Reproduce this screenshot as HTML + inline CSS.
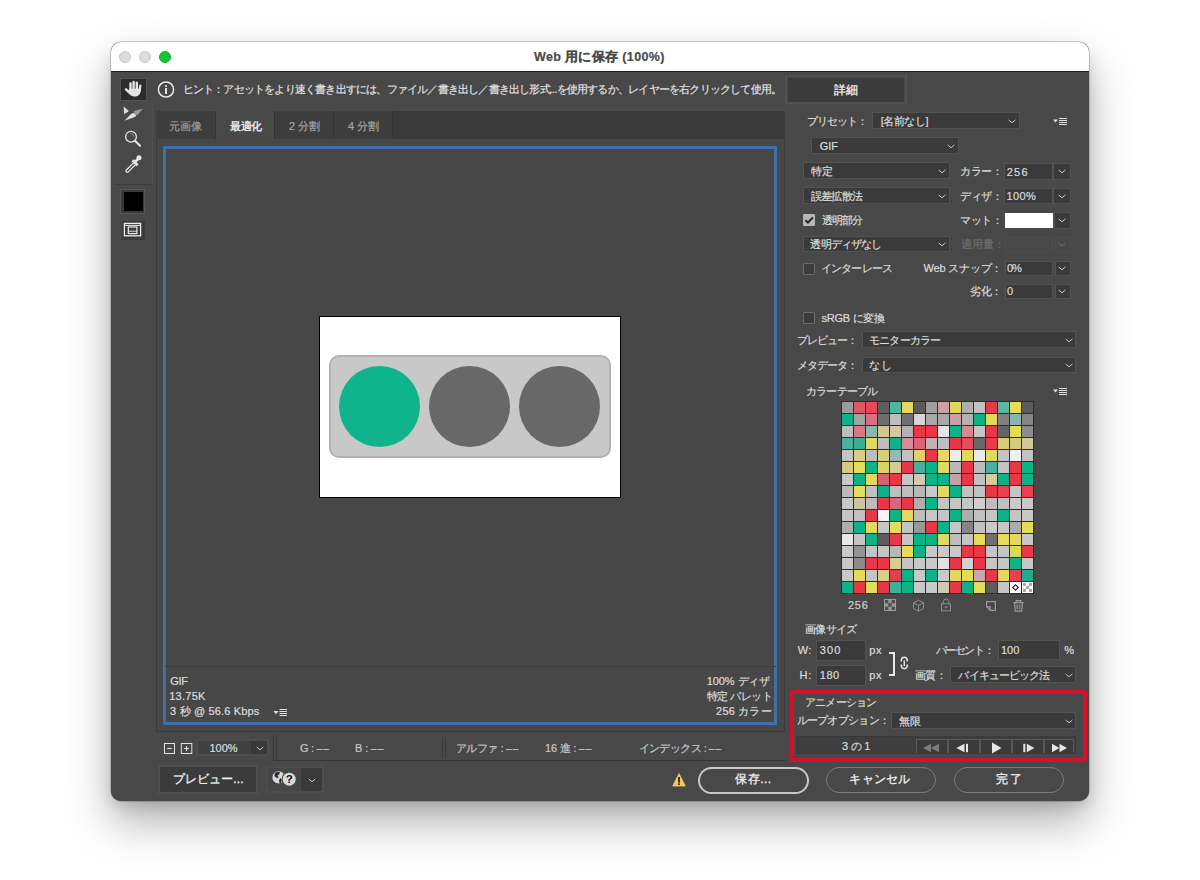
<!DOCTYPE html>
<html><head><meta charset="utf-8">
<style>
*{box-sizing:border-box;margin:0;padding:0}
html,body{width:1200px;height:880px;overflow:hidden;background:#fff;font-family:"Liberation Sans",sans-serif}
.a{position:absolute}
#win{position:absolute;left:111px;top:42px;width:978px;height:759px;border-radius:10px;background:#484848;box-shadow:0 0 0 0.5px rgba(0,0,0,.35),0 22px 44px rgba(0,0,0,.30),0 6px 14px rgba(0,0,0,.12);overflow:hidden}
#title{position:absolute;left:0;top:0;width:978px;height:30px;background:#fff;border-bottom:1px solid #1e1e1e}
.tl{position:absolute;top:9px;width:12px;height:12px;border-radius:50%}
.t{position:absolute;white-space:nowrap;color:#dcdcdc;font-size:11px;line-height:13px;-webkit-text-stroke-width:0.2px}
.dd{position:absolute;background:#3a3a3a;border:1px solid #525252}
.chev{position:absolute;width:5px;height:5px;border-right:1px solid #d0d0d0;border-bottom:1px solid #d0d0d0;transform:rotate(45deg)}
.cb{position:absolute;width:13px;height:13px;background:#3c3c3c;border:1px solid #6c6c6c;border-radius:1px}
.tab{position:absolute;top:111px;height:28px;background:#3d3d3d;border-right:1px solid #343434}
.gc{position:absolute;width:11px;height:11px}
.btn{position:absolute;border-radius:14px;border:1px solid #7c7c7c}
</style></head><body>
<div id="win">
  <div id="title">
    <div class="tl" style="left:8px;background:#dcdcdc;border:1px solid #c8c8c8"></div>
    <div class="tl" style="left:28px;background:#dcdcdc;border:1px solid #c8c8c8"></div>
    <div class="tl" style="left:48px;background:#16c23a;border:1px solid #12ad31"></div>
    <div class="t" style="left:423.1px;top:8px;font-size:12.5px;font-weight:bold;color:#4a4a4a;line-height:15px;letter-spacing:0.349px">Web 用に保存 (100%)</div>
  </div>
</div>

<!-- left toolbar -->
<div class="a" style="left:152px;top:104px;width:1px;height:80px;background:#4f4f4f"></div>
<div class="a" style="left:120px;top:78px;width:27px;height:23px;border:1px solid #525252"></div>
<div class="a" style="left:121px;top:79px;width:25px;height:21px;background:#2b2b2b"></div>
<svg class="a" style="left:121px;top:79px" width="25" height="21" viewBox="0 0 25 21">
 <g stroke="#e4e4e4" stroke-linecap="round" fill="none">
  <path d="M9.5 11.5V4.4" stroke-width="2.4"/><path d="M12.6 11V3" stroke-width="2.4"/><path d="M15.8 11V3.6" stroke-width="2.4"/><path d="M19.3 6.6L18.6 12" stroke-width="2.3"/>
  <path d="M5 10.3L9 14.2" stroke-width="2.5"/>
 </g>
 <path d="M8.2 9.8H19.9C19.9 14.2 18.2 17.4 14.6 17.4H12.6C10.6 17.4 9 16 7.4 13.8Z" fill="#e4e4e4"/>
</svg>
<svg class="a" style="left:121px;top:104px" width="25" height="19" viewBox="0 0 25 19">
 <path d="M2.6 2.4L8 6.9L3.2 10.3Z" fill="#dedede"/>
 <path d="M3.4 16.8L10.6 9.6L13 8.9L15.3 11.2L14.4 12.8Z" fill="#e2e2e2"/>
 <path d="M12.6 7.2L22.2 4.6L16 11.4L13.4 9Z" fill="#9c9c9c"/>
</svg>
<svg class="a" style="left:123px;top:129px" width="20" height="20" viewBox="0 0 20 20">
 <circle cx="8" cy="7.7" r="5.4" fill="none" stroke="#e6e6e6" stroke-width="1.3"/>
 <path d="M7.5 4.5A3.5 3.5 0 0 1 11 7.5" fill="none" stroke="#8a8a8a" stroke-width="1"/>
 <path d="M12.2 12L17 16.8" stroke="#e6e6e6" stroke-width="2.1" stroke-linecap="round"/>
</svg>
<svg class="a" style="left:123px;top:154px" width="20" height="20" viewBox="0 0 20 20">
 <path d="M4.3 16.9L11.6 9.6" stroke="#e6e6e6" stroke-width="4" stroke-linecap="round"/>
 <path d="M4.3 16.9L11.4 9.8" stroke="#474747" stroke-width="1.4" stroke-linecap="round"/>
 <path d="M9.5 6.2L14.6 11.3" stroke="#e6e6e6" stroke-width="2.8"/>
 <circle cx="16" cy="3.8" r="2.5" fill="#e6e6e6"/><path d="M12.6 5.5L14.5 7.4" stroke="#e6e6e6" stroke-width="3.4"/>
</svg>
<div class="a" style="left:115px;top:184px;width:37px;height:1px;background:#3c3c3c"></div>
<div class="a" style="left:120px;top:189px;width:25px;height:25px;background:#3a3a3a;border:1px solid #575757"></div>
<div class="a" style="left:124px;top:192px;width:19px;height:19px;background:#000"></div>
<div class="a" style="left:122px;top:221px;width:23px;height:19px;background:#3a3a3a"></div>
<svg class="a" style="left:122px;top:221px" width="23" height="19" viewBox="0 0 23 19">
 <rect x="2.4" y="2.4" width="16.2" height="12.4" fill="none" stroke="#ececec" stroke-width="1.3"/>
 <path d="M2.4 4.4H18.6" stroke="#ececec" stroke-width="1"/>
 <rect x="6.3" y="6" width="8.6" height="6.6" fill="none" stroke="#ececec" stroke-width="1.2"/>
 <path d="M6.3 10.2H14.9" stroke="#ececec" stroke-width="0.9"/>
</svg>
<!-- hint bar -->
<svg class="a" style="left:157px;top:81px" width="18" height="18" viewBox="0 0 18 18"><circle cx="9" cy="8.5" r="7.6" fill="none" stroke="#e6e6e6" stroke-width="1.5"/><circle cx="9" cy="5" r="1.1" fill="#e6e6e6"/><rect x="8" y="7" width="2" height="6" fill="#e6e6e6"/></svg>
<div class="t" style="left:182.5px;top:83px;color:#e0e0e0;letter-spacing:-0.795px">ヒント：アセットをより速く書き出すには、ファイル／書き出し／書き出し形式...を使用するか、レイヤーを右クリックして使用。</div>
<div class="a" style="left:785px;top:75px;width:122px;height:29px;border:2px solid #515151"></div>
<div class="a" style="left:788px;top:78px;width:116px;height:24px;background:#3b3b3b"></div>
<div class="t" style="left:833.8px;top:84px;font-size:12px;color:#f0f0f0;letter-spacing:0.7px;-webkit-text-stroke-width:0.3px">詳細</div>

<!-- canvas panel -->
<div class="a" style="left:156px;top:111px;width:629px;height:621px;background:#474747;border:1px solid #3a3a3a"></div>
<div class="a" style="left:156px;top:111px;width:629px;height:28px;background:#3a3a3a"></div>
<div class="tab" style="left:156px;width:60px"></div>
<div class="tab" style="left:216px;width:59px;background:#484848"></div>
<div class="tab" style="left:275px;width:59px"></div>
<div class="tab" style="left:334px;width:59px"></div>
<div class="t" style="left:169px;top:120px;color:#9c9c9c;letter-spacing:0.2px">元画像</div>
<div class="t" style="left:230px;top:120px;color:#f4f4f4;-webkit-text-stroke-width:0.32px;letter-spacing:-0.3px">最適化</div>
<div class="t" style="left:289px;top:120px;color:#a8a8a8;letter-spacing:0.1px">2 分割</div>
<div class="t" style="left:348px;top:120px;color:#a8a8a8;letter-spacing:0.1px">4 分割</div>

<div class="a" style="left:163px;top:146px;width:614px;height:579px;border:3px solid #3f70a8"></div>
<div class="a" style="left:165px;top:666px;width:611px;height:1px;background:#3c3c3c"></div>

<!-- image -->
<div class="a" style="left:319px;top:316px;width:302px;height:182px;background:#fff;border:1px solid #000"></div>
<div class="a" style="left:329px;top:355px;width:282px;height:103px;background:#c8c8c8;border:2px solid #b2b2b2;border-radius:10px"></div>
<div class="a" style="left:339px;top:366px;width:81px;height:81px;border-radius:50%;background:#0fb48c"></div>
<div class="a" style="left:429px;top:366px;width:81px;height:81px;border-radius:50%;background:#686868"></div>
<div class="a" style="left:519px;top:366px;width:81px;height:81px;border-radius:50%;background:#686868"></div>

<!-- info -->
<div class="t" style="left:170.2px;top:675px;letter-spacing:-0.3px">GIF</div>
<div class="t" style="left:169.2px;top:690px;letter-spacing:0.26px">13.75K</div>
<div class="t" style="left:170px;top:705px;letter-spacing:0.17px">3 秒 @ 56.6 Kbps</div>
<div class="t" style="left:706.7px;top:675px;letter-spacing:-0.071px">100% ディザ</div>
<div class="t" style="left:707.0px;top:690px;letter-spacing:-0.567px">特定 パレット</div>
<div class="t" style="left:716.1px;top:705px;letter-spacing:0.184px">256 カラー</div>

<!-- status bar -->
<div class="a" style="left:273px;top:760px;width:512px;height:1px;background:#353535"></div>
<div class="a" style="left:196px;top:739px;width:73px;height:17px;border:2px solid #4d4d4d;background:#414141"></div>
<div class="a" style="left:251px;top:741px;width:16px;height:13px;background:#383838"></div>
<div class="t" style="left:196px;top:742px;width:55px;text-align:center">100%</div>
<div class="a" style="left:273px;top:735px;width:1px;height:25px;background:#3a3a3a"></div>
<div class="a" style="left:276px;top:735px;width:1px;height:25px;background:#3a3a3a"></div>
<div class="a" style="left:442px;top:737px;width:1px;height:21px;background:#3a3a3a"></div>
<div class="a" style="left:445px;top:737px;width:1px;height:21px;background:#3a3a3a"></div>
<div class="t" style="left:300px;top:742px;color:#c8c8c8;letter-spacing:-0.3px">G : <span style="letter-spacing:1.2px;font-size:10px">––</span></div>
<div class="t" style="left:355px;top:742px;color:#c8c8c8;letter-spacing:-0.1px">B : <span style="letter-spacing:1.2px;font-size:10px">––</span></div>
<div class="t" style="left:455.5px;top:742px;color:#c8c8c8;letter-spacing:-0.39px">アルファ : <span style="letter-spacing:1.2px;font-size:10px">––</span></div>
<div class="t" style="left:545px;top:742px;color:#c8c8c8;letter-spacing:-0.21px">16 進 : <span style="letter-spacing:1.2px;font-size:10px">––</span></div>
<div class="t" style="left:638.6px;top:742px;color:#c8c8c8;letter-spacing:-0.57px">インデックス : <span style="letter-spacing:1.2px;font-size:10px">––</span></div>

<!-- bottom buttons -->
<div class="a" style="left:158px;top:765px;width:100px;height:29px;border:2px solid #4f4f4f"></div>
<div class="a" style="left:160px;top:767px;width:96px;height:25px;background:#3b3b3b"></div>
<div class="t" style="left:172.6px;top:773px;font-size:12px;color:#f0f0f0;letter-spacing:0.143px;-webkit-text-stroke-width:0.3px">プレビュー...</div>
<div class="a" style="left:266px;top:766px;width:58px;height:27px;border:2px solid #4d4d4d"></div>
<div class="a" style="left:268px;top:768px;width:32px;height:23px;background:#464646"></div>
<div class="a" style="left:301px;top:768px;width:21px;height:23px;background:#3a3a3a"></div>

<div class="btn" style="left:697.5px;top:766.5px;width:111px;height:27px;border:2px solid #c8c8c8"></div>
<div class="t" style="left:735.4px;top:773px;font-size:12px;color:#f0f0f0;letter-spacing:0.4px;-webkit-text-stroke-width:0.3px">保存...</div>
<div class="btn" style="left:826px;top:767px;width:110px;height:26px"></div>
<div class="t" style="left:849.4px;top:773px;font-size:12px;color:#f0f0f0;letter-spacing:0.15px;-webkit-text-stroke-width:0.3px">キャンセル</div>
<div class="btn" style="left:954px;top:767px;width:110px;height:26px"></div>
<div class="t" style="left:996.1px;top:773px;font-size:12px;color:#f0f0f0;letter-spacing:1.9px;-webkit-text-stroke-width:0.3px">完了</div>


<!-- right panel -->
<div class="t" style="left:806.5px;top:115px;letter-spacing:-1.0px">プリセット：</div>
<div class="dd" style="left:872px;top:112px;width:148px;height:17px"></div>
<div class="t" style="left:880.75px;top:115px;letter-spacing:-0.45px">[名前なし]</div>
<svg class="a" style="left:1053px;top:117px" width="15" height="9" viewBox="0 0 15 9"><path d="M0 2.5h5l-2.5 3z" fill="#e0e0e0"/><rect x="6" y="1" width="8" height="1" fill="#e0e0e0"/><rect x="6" y="3" width="8" height="1" fill="#e0e0e0"/><rect x="6" y="5" width="8" height="1" fill="#e0e0e0"/><rect x="6" y="7" width="8" height="1" fill="#e0e0e0"/></svg>

<div class="dd" style="left:811px;top:137px;width:148px;height:17px"></div>
<div class="t" style="left:819.8px;top:140px;letter-spacing:-0.05px">GIF</div>

<div class="dd" style="left:803px;top:162px;width:147px;height:17px"></div>
<div class="t" style="left:811px;top:165px">特定</div>
<div class="t" style="left:960.2px;top:165px;letter-spacing:-0.367px">カラー：</div>
<div class="dd" style="left:1004px;top:163px;width:49px;height:17px"></div>
<div class="dd" style="left:1053px;top:163px;width:18px;height:17px"></div>
<div class="t" style="left:1006.8px;top:166px;letter-spacing:1.2px">256</div>

<div class="dd" style="left:803px;top:187px;width:147px;height:17px"></div>
<div class="t" style="left:810.75px;top:190px;letter-spacing:-0.75px">誤差拡散法</div>
<div class="t" style="left:960.2px;top:190px;letter-spacing:-0.367px">ディザ：</div>
<div class="dd" style="left:1004px;top:188px;width:49px;height:16px"></div>
<div class="dd" style="left:1053px;top:188px;width:18px;height:16px"></div>
<div class="t" style="left:1006.4px;top:190px;letter-spacing:0.4px">100%</div>

<div class="cb" style="left:803px;top:214px;width:12px;height:12px;background:#b6b6b6;border-color:#b6b6b6"></div>
<svg class="a" style="left:803px;top:214px" width="12" height="12" viewBox="0 0 12 12"><path d="M2.4 6.1l2.5 2.5 4.9-5.1" fill="none" stroke="#262626" stroke-width="2"/></svg>
<div class="t" style="left:821.5px;top:214px;letter-spacing:-0.934px">透明部分</div>
<div class="t" style="left:960.2px;top:214px;letter-spacing:-0.367px">マット：</div>
<div class="a" style="left:1005px;top:213px;width:48px;height:15px;background:#fff"></div>
<div class="dd" style="left:1054px;top:212px;width:17px;height:17px"></div>

<div class="dd" style="left:803px;top:236px;width:147px;height:16px"></div>
<div class="t" style="left:810.4px;top:238px;letter-spacing:-0.833px">透明ディザなし</div>
<div class="t" style="left:961px;top:238px;color:#6e6e6e">適用量：</div>
<div class="a" style="left:1005px;top:237px;width:48px;height:15px;border:1px solid #4e4e4e"></div>
<div class="a" style="left:1055px;top:237px;width:16px;height:15px;border:1px solid #4e4e4e"></div>

<div class="cb" style="left:803px;top:263px;width:12px;height:12px"></div>
<div class="t" style="left:820.5px;top:262px;letter-spacing:-0.667px">インターレース</div>
<div class="t" style="left:923.6px;top:262px;letter-spacing:-0.2px">Web スナップ：</div>
<div class="dd" style="left:1005px;top:261px;width:48px;height:15px"></div>
<div class="dd" style="left:1055px;top:261px;width:16px;height:15px"></div>
<div class="t" style="left:1006.9px;top:262px;letter-spacing:-0.9px">0%</div>

<div class="t" style="left:970.4px;top:285px;letter-spacing:-0.7px">劣化：</div>
<div class="dd" style="left:1005px;top:284px;width:48px;height:15px"></div>
<div class="dd" style="left:1055px;top:284px;width:16px;height:15px"></div>
<div class="t" style="left:1006.9px;top:285px;letter-spacing:0.6px">0</div>

<div class="cb" style="left:803px;top:312px;width:12px;height:12px"></div>
<div class="t" style="left:821.5px;top:312px;letter-spacing:-0.272px">sRGB に変換</div>

<div class="t" style="left:796.5px;top:334px;letter-spacing:-0.92px">プレビュー：</div>
<div class="dd" style="left:862px;top:331px;width:214px;height:17px"></div>
<div class="t" style="left:869.0px;top:334px;letter-spacing:-0.833px">モニターカラー</div>

<div class="t" style="left:796.5px;top:359px;letter-spacing:-0.92px">メタデータ：</div>
<div class="dd" style="left:862px;top:357px;width:214px;height:16px"></div>
<div class="t" style="left:869.4px;top:359px;letter-spacing:0.2px">なし</div>

<div class="t" style="left:806.1px;top:385px;letter-spacing:-0.834px">カラーテーブル</div>
<svg class="a" style="left:1053px;top:387px" width="15" height="9" viewBox="0 0 15 9"><path d="M0 2.5h5l-2.5 3z" fill="#e0e0e0"/><rect x="6" y="1" width="8" height="1" fill="#e0e0e0"/><rect x="6" y="3" width="8" height="1" fill="#e0e0e0"/><rect x="6" y="5" width="8" height="1" fill="#e0e0e0"/><rect x="6" y="7" width="8" height="1" fill="#e0e0e0"/></svg>

<div id="grid" class="a" style="left:841px;top:401px;width:193px;height:193px;background:#2c2c2c"></div>
<!--GRID-->
<div class="gc" style="left:842px;top:402px;background:#9c9c9d"></div>
<div class="gc" style="left:854px;top:402px;background:#e05868"></div>
<div class="gc" style="left:866px;top:402px;background:#e84858"></div>
<div class="gc" style="left:878px;top:402px;background:#5e5e5f"></div>
<div class="gc" style="left:890px;top:402px;background:#4cb8a0"></div>
<div class="gc" style="left:902px;top:402px;background:#e6d85c"></div>
<div class="gc" style="left:914px;top:402px;background:#5a5a5b"></div>
<div class="gc" style="left:926px;top:402px;background:#a0a0a1"></div>
<div class="gc" style="left:938px;top:402px;background:#d0a0a8"></div>
<div class="gc" style="left:950px;top:402px;background:#e0d85c"></div>
<div class="gc" style="left:962px;top:402px;background:#aeaeaf"></div>
<div class="gc" style="left:974px;top:402px;background:#c1c1c2"></div>
<div class="gc" style="left:986px;top:402px;background:#e83848"></div>
<div class="gc" style="left:998px;top:402px;background:#58b8a4"></div>
<div class="gc" style="left:1010px;top:402px;background:#e8dc58"></div>
<div class="gc" style="left:1022px;top:402px;background:#5c5c5d"></div>
<div class="gc" style="left:842px;top:414px;background:#0db387"></div>
<div class="gc" style="left:854px;top:414px;background:#a2a2a3"></div>
<div class="gc" style="left:866px;top:414px;background:#d87080"></div>
<div class="gc" style="left:878px;top:414px;background:#6e6e6f"></div>
<div class="gc" style="left:890px;top:414px;background:#bdbdbe"></div>
<div class="gc" style="left:902px;top:414px;background:#707071"></div>
<div class="gc" style="left:914px;top:414px;background:#d6d6d7"></div>
<div class="gc" style="left:926px;top:414px;background:#a8a8a9"></div>
<div class="gc" style="left:938px;top:414px;background:#a8a8a9"></div>
<div class="gc" style="left:950px;top:414px;background:#c8a0a8"></div>
<div class="gc" style="left:962px;top:414px;background:#b2b2b3"></div>
<div class="gc" style="left:974px;top:414px;background:#0db387"></div>
<div class="gc" style="left:986px;top:414px;background:#e4d858"></div>
<div class="gc" style="left:998px;top:414px;background:#808081"></div>
<div class="gc" style="left:1010px;top:414px;background:#88b4b4"></div>
<div class="gc" style="left:1022px;top:414px;background:#848485"></div>
<div class="gc" style="left:842px;top:426px;background:#bdbdbe"></div>
<div class="gc" style="left:854px;top:426px;background:#d87884"></div>
<div class="gc" style="left:866px;top:426px;background:#88b8b0"></div>
<div class="gc" style="left:878px;top:426px;background:#d0c88c"></div>
<div class="gc" style="left:890px;top:426px;background:#d4c8a4"></div>
<div class="gc" style="left:902px;top:426px;background:#b2b2b3"></div>
<div class="gc" style="left:914px;top:426px;background:#e83848"></div>
<div class="gc" style="left:926px;top:426px;background:#e83848"></div>
<div class="gc" style="left:938px;top:426px;background:#e4e4e5"></div>
<div class="gc" style="left:950px;top:426px;background:#0db387"></div>
<div class="gc" style="left:962px;top:426px;background:#d88890"></div>
<div class="gc" style="left:974px;top:426px;background:#c5c5c6"></div>
<div class="gc" style="left:986px;top:426px;background:#e83848"></div>
<div class="gc" style="left:998px;top:426px;background:#646465"></div>
<div class="gc" style="left:1010px;top:426px;background:#e4dc58"></div>
<div class="gc" style="left:1022px;top:426px;background:#8c8c8d"></div>
<div class="gc" style="left:842px;top:438px;background:#4ab09c"></div>
<div class="gc" style="left:854px;top:438px;background:#3aae94"></div>
<div class="gc" style="left:866px;top:438px;background:#e0d860"></div>
<div class="gc" style="left:878px;top:438px;background:#bebebf"></div>
<div class="gc" style="left:890px;top:438px;background:#0db387"></div>
<div class="gc" style="left:902px;top:438px;background:#d48c98"></div>
<div class="gc" style="left:914px;top:438px;background:#dc6474"></div>
<div class="gc" style="left:926px;top:438px;background:#c4b0b4"></div>
<div class="gc" style="left:938px;top:438px;background:#bebebf"></div>
<div class="gc" style="left:950px;top:438px;background:#e83848"></div>
<div class="gc" style="left:962px;top:438px;background:#e44c5c"></div>
<div class="gc" style="left:974px;top:438px;background:#686869"></div>
<div class="gc" style="left:986px;top:438px;background:#e83a4a"></div>
<div class="gc" style="left:998px;top:438px;background:#d8cc78"></div>
<div class="gc" style="left:1010px;top:438px;background:#d4cc84"></div>
<div class="gc" style="left:1022px;top:438px;background:#d0c898"></div>
<div class="gc" style="left:842px;top:450px;background:#c4c4c5"></div>
<div class="gc" style="left:854px;top:450px;background:#d8d080"></div>
<div class="gc" style="left:866px;top:450px;background:#bdbdbe"></div>
<div class="gc" style="left:878px;top:450px;background:#d8d078"></div>
<div class="gc" style="left:890px;top:450px;background:#98b8b8"></div>
<div class="gc" style="left:902px;top:450px;background:#c2c2c3"></div>
<div class="gc" style="left:914px;top:450px;background:#e0d070"></div>
<div class="gc" style="left:926px;top:450px;background:#e83848"></div>
<div class="gc" style="left:938px;top:450px;background:#e4d860"></div>
<div class="gc" style="left:950px;top:450px;background:#ededee"></div>
<div class="gc" style="left:962px;top:450px;background:#e4d858"></div>
<div class="gc" style="left:974px;top:450px;background:#eaeaeb"></div>
<div class="gc" style="left:986px;top:450px;background:#e0d860"></div>
<div class="gc" style="left:998px;top:450px;background:#c4c4c5"></div>
<div class="gc" style="left:1010px;top:450px;background:#f0f0f1"></div>
<div class="gc" style="left:1022px;top:450px;background:#c2c2c3"></div>
<div class="gc" style="left:842px;top:462px;background:#d4cc84"></div>
<div class="gc" style="left:854px;top:462px;background:#e4dc5c"></div>
<div class="gc" style="left:866px;top:462px;background:#0db387"></div>
<div class="gc" style="left:878px;top:462px;background:#dcd468"></div>
<div class="gc" style="left:890px;top:462px;background:#d4cc94"></div>
<div class="gc" style="left:902px;top:462px;background:#e83848"></div>
<div class="gc" style="left:914px;top:462px;background:#48b09c"></div>
<div class="gc" style="left:926px;top:462px;background:#0db387"></div>
<div class="gc" style="left:938px;top:462px;background:#e0d860"></div>
<div class="gc" style="left:950px;top:462px;background:#b8b8b9"></div>
<div class="gc" style="left:962px;top:462px;background:#e83848"></div>
<div class="gc" style="left:974px;top:462px;background:#bcbcbd"></div>
<div class="gc" style="left:986px;top:462px;background:#48b09c"></div>
<div class="gc" style="left:998px;top:462px;background:#c4c4c5"></div>
<div class="gc" style="left:1010px;top:462px;background:#e83848"></div>
<div class="gc" style="left:1022px;top:462px;background:#0db387"></div>
<div class="gc" style="left:842px;top:474px;background:#c8c8c9"></div>
<div class="gc" style="left:854px;top:474px;background:#0db387"></div>
<div class="gc" style="left:866px;top:474px;background:#e4d860"></div>
<div class="gc" style="left:878px;top:474px;background:#d86070"></div>
<div class="gc" style="left:890px;top:474px;background:#e83848"></div>
<div class="gc" style="left:902px;top:474px;background:#c5c5c6"></div>
<div class="gc" style="left:914px;top:474px;background:#d4c8b4"></div>
<div class="gc" style="left:926px;top:474px;background:#0db387"></div>
<div class="gc" style="left:938px;top:474px;background:#0db387"></div>
<div class="gc" style="left:950px;top:474px;background:#c8a0a8"></div>
<div class="gc" style="left:962px;top:474px;background:#e83848"></div>
<div class="gc" style="left:974px;top:474px;background:#c1c1c2"></div>
<div class="gc" style="left:986px;top:474px;background:#d8cc9c"></div>
<div class="gc" style="left:998px;top:474px;background:#0db387"></div>
<div class="gc" style="left:1010px;top:474px;background:#e83848"></div>
<div class="gc" style="left:1022px;top:474px;background:#0db387"></div>
<div class="gc" style="left:842px;top:486px;background:#bababb"></div>
<div class="gc" style="left:854px;top:486px;background:#e8dc5c"></div>
<div class="gc" style="left:866px;top:486px;background:#c1c1c2"></div>
<div class="gc" style="left:878px;top:486px;background:#0db387"></div>
<div class="gc" style="left:890px;top:486px;background:#bebebf"></div>
<div class="gc" style="left:902px;top:486px;background:#bdbdbe"></div>
<div class="gc" style="left:914px;top:486px;background:#b8b8b9"></div>
<div class="gc" style="left:926px;top:486px;background:#c9c9ca"></div>
<div class="gc" style="left:938px;top:486px;background:#e0d860"></div>
<div class="gc" style="left:950px;top:486px;background:#0db387"></div>
<div class="gc" style="left:962px;top:486px;background:#c1c1c2"></div>
<div class="gc" style="left:974px;top:486px;background:#c1c1c2"></div>
<div class="gc" style="left:986px;top:486px;background:#e83848"></div>
<div class="gc" style="left:998px;top:486px;background:#e84050"></div>
<div class="gc" style="left:1010px;top:486px;background:#c4c4c5"></div>
<div class="gc" style="left:1022px;top:486px;background:#e84050"></div>
<div class="gc" style="left:842px;top:498px;background:#c8c8c9"></div>
<div class="gc" style="left:854px;top:498px;background:#ccc4a0"></div>
<div class="gc" style="left:866px;top:498px;background:#bcbcbd"></div>
<div class="gc" style="left:878px;top:498px;background:#e83848"></div>
<div class="gc" style="left:890px;top:498px;background:#d86878"></div>
<div class="gc" style="left:902px;top:498px;background:#e83848"></div>
<div class="gc" style="left:914px;top:498px;background:#aeaeaf"></div>
<div class="gc" style="left:926px;top:498px;background:#0db387"></div>
<div class="gc" style="left:938px;top:498px;background:#c4c4c5"></div>
<div class="gc" style="left:950px;top:498px;background:#c4c4c5"></div>
<div class="gc" style="left:962px;top:498px;background:#c5c5c6"></div>
<div class="gc" style="left:974px;top:498px;background:#cececf"></div>
<div class="gc" style="left:986px;top:498px;background:#bdbdbe"></div>
<div class="gc" style="left:998px;top:498px;background:#c1c1c2"></div>
<div class="gc" style="left:1010px;top:498px;background:#cacacb"></div>
<div class="gc" style="left:1022px;top:498px;background:#c8c8c9"></div>
<div class="gc" style="left:842px;top:510px;background:#c5c5c6"></div>
<div class="gc" style="left:854px;top:510px;background:#c1c1c2"></div>
<div class="gc" style="left:866px;top:510px;background:#e83848"></div>
<div class="gc" style="left:878px;top:510px;background:#f5f5f6"></div>
<div class="gc" style="left:890px;top:510px;background:#0db387"></div>
<div class="gc" style="left:902px;top:510px;background:#e4d860"></div>
<div class="gc" style="left:914px;top:510px;background:#bebebf"></div>
<div class="gc" style="left:926px;top:510px;background:#c6c6c7"></div>
<div class="gc" style="left:938px;top:510px;background:#c5c5c6"></div>
<div class="gc" style="left:950px;top:510px;background:#0db387"></div>
<div class="gc" style="left:962px;top:510px;background:#aeaeaf"></div>
<div class="gc" style="left:974px;top:510px;background:#c2c2c3"></div>
<div class="gc" style="left:986px;top:510px;background:#c6c6c7"></div>
<div class="gc" style="left:998px;top:510px;background:#0db387"></div>
<div class="gc" style="left:1010px;top:510px;background:#c5c5c6"></div>
<div class="gc" style="left:1022px;top:510px;background:#c8c8c9"></div>
<div class="gc" style="left:842px;top:522px;background:#aeaeaf"></div>
<div class="gc" style="left:854px;top:522px;background:#0db387"></div>
<div class="gc" style="left:866px;top:522px;background:#e4d860"></div>
<div class="gc" style="left:878px;top:522px;background:#c5c5c6"></div>
<div class="gc" style="left:890px;top:522px;background:#e4dc60"></div>
<div class="gc" style="left:902px;top:522px;background:#c5c5c6"></div>
<div class="gc" style="left:914px;top:522px;background:#989899"></div>
<div class="gc" style="left:926px;top:522px;background:#e83848"></div>
<div class="gc" style="left:938px;top:522px;background:#0db387"></div>
<div class="gc" style="left:950px;top:522px;background:#c6c6c7"></div>
<div class="gc" style="left:962px;top:522px;background:#858586"></div>
<div class="gc" style="left:974px;top:522px;background:#c2c2c3"></div>
<div class="gc" style="left:986px;top:522px;background:#c8c8c9"></div>
<div class="gc" style="left:998px;top:522px;background:#c6c6c7"></div>
<div class="gc" style="left:1010px;top:522px;background:#acacad"></div>
<div class="gc" style="left:1022px;top:522px;background:#e4dc58"></div>
<div class="gc" style="left:842px;top:534px;background:#e8e8e9"></div>
<div class="gc" style="left:854px;top:534px;background:#c5c5c6"></div>
<div class="gc" style="left:866px;top:534px;background:#0db387"></div>
<div class="gc" style="left:878px;top:534px;background:#5c5c5d"></div>
<div class="gc" style="left:890px;top:534px;background:#e83848"></div>
<div class="gc" style="left:902px;top:534px;background:#c5c5c6"></div>
<div class="gc" style="left:914px;top:534px;background:#0db387"></div>
<div class="gc" style="left:926px;top:534px;background:#0db387"></div>
<div class="gc" style="left:938px;top:534px;background:#e0d864"></div>
<div class="gc" style="left:950px;top:534px;background:#bdbdbe"></div>
<div class="gc" style="left:962px;top:534px;background:#c4c4c5"></div>
<div class="gc" style="left:974px;top:534px;background:#e4dc58"></div>
<div class="gc" style="left:986px;top:534px;background:#707071"></div>
<div class="gc" style="left:998px;top:534px;background:#e4dc58"></div>
<div class="gc" style="left:1010px;top:534px;background:#e4d860"></div>
<div class="gc" style="left:1022px;top:534px;background:#c8c8c9"></div>
<div class="gc" style="left:842px;top:546px;background:#c9c9ca"></div>
<div class="gc" style="left:854px;top:546px;background:#949495"></div>
<div class="gc" style="left:866px;top:546px;background:#c5c5c6"></div>
<div class="gc" style="left:878px;top:546px;background:#c5c5c6"></div>
<div class="gc" style="left:890px;top:546px;background:#b8b8b9"></div>
<div class="gc" style="left:902px;top:546px;background:#e8dc58"></div>
<div class="gc" style="left:914px;top:546px;background:#0db387"></div>
<div class="gc" style="left:926px;top:546px;background:#c8c8c9"></div>
<div class="gc" style="left:938px;top:546px;background:#c9c9ca"></div>
<div class="gc" style="left:950px;top:546px;background:#c9c9ca"></div>
<div class="gc" style="left:962px;top:546px;background:#e83848"></div>
<div class="gc" style="left:974px;top:546px;background:#e83848"></div>
<div class="gc" style="left:986px;top:546px;background:#c5c5c6"></div>
<div class="gc" style="left:998px;top:546px;background:#c5c5c6"></div>
<div class="gc" style="left:1010px;top:546px;background:#e0d858"></div>
<div class="gc" style="left:1022px;top:546px;background:#e83848"></div>
<div class="gc" style="left:842px;top:558px;background:#c8c8c9"></div>
<div class="gc" style="left:854px;top:558px;background:#8c8c8d"></div>
<div class="gc" style="left:866px;top:558px;background:#e83848"></div>
<div class="gc" style="left:878px;top:558px;background:#e83848"></div>
<div class="gc" style="left:890px;top:558px;background:#d8cc90"></div>
<div class="gc" style="left:902px;top:558px;background:#c5c5c6"></div>
<div class="gc" style="left:914px;top:558px;background:#c8c8c9"></div>
<div class="gc" style="left:926px;top:558px;background:#c9c9ca"></div>
<div class="gc" style="left:938px;top:558px;background:#e1e1e2"></div>
<div class="gc" style="left:950px;top:558px;background:#e83848"></div>
<div class="gc" style="left:962px;top:558px;background:#d1d1d2"></div>
<div class="gc" style="left:974px;top:558px;background:#e83848"></div>
<div class="gc" style="left:986px;top:558px;background:#c5c5c6"></div>
<div class="gc" style="left:998px;top:558px;background:#c6c6c7"></div>
<div class="gc" style="left:1010px;top:558px;background:#0db387"></div>
<div class="gc" style="left:1022px;top:558px;background:#c6c6c7"></div>
<div class="gc" style="left:842px;top:570px;background:#c8c8c9"></div>
<div class="gc" style="left:854px;top:570px;background:#e4dc58"></div>
<div class="gc" style="left:866px;top:570px;background:#c4c4c5"></div>
<div class="gc" style="left:878px;top:570px;background:#d8d088"></div>
<div class="gc" style="left:890px;top:570px;background:#e04050"></div>
<div class="gc" style="left:902px;top:570px;background:#0db387"></div>
<div class="gc" style="left:914px;top:570px;background:#c8c8c9"></div>
<div class="gc" style="left:926px;top:570px;background:#0db387"></div>
<div class="gc" style="left:938px;top:570px;background:#c9c9ca"></div>
<div class="gc" style="left:950px;top:570px;background:#e4d860"></div>
<div class="gc" style="left:962px;top:570px;background:#e4dc58"></div>
<div class="gc" style="left:974px;top:570px;background:#c8a8b0"></div>
<div class="gc" style="left:986px;top:570px;background:#e83848"></div>
<div class="gc" style="left:998px;top:570px;background:#e4d860"></div>
<div class="gc" style="left:1010px;top:570px;background:#e84050"></div>
<div class="gc" style="left:1022px;top:570px;background:#20ac90"></div>
<div class="gc" style="left:842px;top:582px;background:#0db387"></div>
<div class="gc" style="left:854px;top:582px;background:#e83848"></div>
<div class="gc" style="left:866px;top:582px;background:#e4dc5c"></div>
<div class="gc" style="left:878px;top:582px;background:#e83848"></div>
<div class="gc" style="left:890px;top:582px;background:#34b498"></div>
<div class="gc" style="left:902px;top:582px;background:#0db387"></div>
<div class="gc" style="left:914px;top:582px;background:#c8c8c9"></div>
<div class="gc" style="left:926px;top:582px;background:#c9c9ca"></div>
<div class="gc" style="left:938px;top:582px;background:#d0c8b0"></div>
<div class="gc" style="left:950px;top:582px;background:#e83848"></div>
<div class="gc" style="left:962px;top:582px;background:#0db387"></div>
<div class="gc" style="left:974px;top:582px;background:#e4dc58"></div>
<div class="gc" style="left:986px;top:582px;background:#5c5c5d"></div>
<div class="gc" style="left:998px;top:582px;background:#c5c5c6"></div>
<div class="gc" style="left:1010px;top:582px;background:#fff"></div>
<div class="a" style="left:1013px;top:585px;width:5px;height:5px;border:1px solid #111;transform:rotate(45deg)"></div>
<div class="gc" style="left:1022px;top:582px;background:#fff"></div>
<div class="a" style="left:1023px;top:583px;width:3px;height:3px;background:#a8a8a8"></div>
<div class="a" style="left:1029px;top:583px;width:3px;height:3px;background:#a8a8a8"></div>
<div class="a" style="left:1026px;top:586px;width:3px;height:3px;background:#a8a8a8"></div>
<div class="a" style="left:1023px;top:589px;width:3px;height:3px;background:#a8a8a8"></div>
<div class="a" style="left:1029px;top:589px;width:3px;height:3px;background:#a8a8a8"></div>
<!--/GRID-->

<div class="t" style="left:848.0px;top:599px;color:#d0d0d0;letter-spacing:0.75px">256</div>

<div class="t" style="left:805.3px;top:623px;letter-spacing:-0.8px">画像サイズ</div>
<div class="t" style="left:797.8px;top:644px;letter-spacing:0.3px">W:</div>
<div class="dd" style="left:816px;top:640px;width:50px;height:21px"></div>
<div class="t" style="left:819.8px;top:644px;letter-spacing:1.05px">300</div>
<div class="t" style="left:869.2px;top:644px;letter-spacing:0.7px">px</div>
<div class="t" style="left:799.4px;top:669px;letter-spacing:0.8px">H:</div>
<div class="dd" style="left:816px;top:665px;width:50px;height:21px"></div>
<div class="t" style="left:819.8px;top:669px;letter-spacing:0.5px">180</div>
<div class="t" style="left:869.2px;top:669px;letter-spacing:0.7px">px</div>
<svg class="a" style="left:886px;top:650px" width="24" height="28" viewBox="0 0 24 28">
 <path d="M3 3H8V25H3" fill="none" stroke="#e8e8e8" stroke-width="2"/>
 <path d="M15.3 11.5V9.8A3 3 0 0 1 21.2 9.8V11.5 M15.3 14.5V16.2A3 3 0 0 0 21.2 16.2V14.5" fill="none" stroke="#e8e8e8" stroke-width="1.5"/>
 <path d="M18.25 11V15.5" stroke="#e8e8e8" stroke-width="1.4" stroke-linecap="round"/>
</svg>
<div class="t" style="left:935.6px;top:644px;letter-spacing:-1.38px">パーセント：</div>
<div class="dd" style="left:998px;top:640px;width:62px;height:20px"></div>
<div class="t" style="left:1001px;top:644px">100</div>
<div class="t" style="left:1064.2px;top:644px;letter-spacing:-0.2px">%</div>
<div class="t" style="left:915.2px;top:669px;letter-spacing:-0.8px">画質：</div>
<div class="dd" style="left:950px;top:666px;width:126px;height:17px"></div>
<div class="t" style="left:958.4px;top:669px;letter-spacing:-0.875px">バイキュービック法</div>

<!-- animation -->
<div class="a" style="left:790px;top:690px;width:297px;height:72px;border:4px solid #d6102a;border-radius:3px"></div>
<div class="t" style="left:805.0px;top:696px;letter-spacing:-0.833px">アニメーション</div>
<div class="t" style="left:796.5px;top:714px;letter-spacing:-0.688px">ループオプション：</div>
<div class="dd" style="left:891px;top:712px;width:185px;height:17px"></div>
<div class="t" style="left:899px;top:715px;letter-spacing:0px">無限</div>
<div class="a" style="left:796px;top:736px;width:280px;height:18px;background:#3e3e3e;border:1px solid #383838"></div>
<div class="t" style="left:842px;top:740px;letter-spacing:-0.25px">3 の 1</div>


<!-- chevrons -->
<svg class="a" style="left:1008px;top:118.5px" width="8" height="5" viewBox="0 0 8 5"><path d="M0.6 0.9L4 3.8L7.4 0.9" fill="none" stroke="#cfcfcf" stroke-width="0.95"/></svg>
<svg class="a" style="left:947px;top:144.0px" width="8" height="5" viewBox="0 0 8 5"><path d="M0.6 0.9L4 3.8L7.4 0.9" fill="none" stroke="#cfcfcf" stroke-width="0.95"/></svg>
<svg class="a" style="left:938px;top:169.0px" width="8" height="5" viewBox="0 0 8 5"><path d="M0.6 0.9L4 3.8L7.4 0.9" fill="none" stroke="#cfcfcf" stroke-width="0.95"/></svg>
<svg class="a" style="left:938px;top:194.0px" width="8" height="5" viewBox="0 0 8 5"><path d="M0.6 0.9L4 3.8L7.4 0.9" fill="none" stroke="#cfcfcf" stroke-width="0.95"/></svg>
<svg class="a" style="left:938px;top:241.5px" width="8" height="5" viewBox="0 0 8 5"><path d="M0.6 0.9L4 3.8L7.4 0.9" fill="none" stroke="#cfcfcf" stroke-width="0.95"/></svg>
<svg class="a" style="left:1058px;top:169.0px" width="8" height="5" viewBox="0 0 8 5"><path d="M0.6 0.9L4 3.8L7.4 0.9" fill="none" stroke="#cfcfcf" stroke-width="0.95"/></svg>
<svg class="a" style="left:1058px;top:194.0px" width="8" height="5" viewBox="0 0 8 5"><path d="M0.6 0.9L4 3.8L7.4 0.9" fill="none" stroke="#cfcfcf" stroke-width="0.95"/></svg>
<svg class="a" style="left:1058px;top:217.5px" width="8" height="5" viewBox="0 0 8 5"><path d="M0.6 0.9L4 3.8L7.4 0.9" fill="none" stroke="#cfcfcf" stroke-width="0.95"/></svg>
<svg class="a" style="left:1058px;top:265.5px" width="8" height="5" viewBox="0 0 8 5"><path d="M0.6 0.9L4 3.8L7.4 0.9" fill="none" stroke="#cfcfcf" stroke-width="0.95"/></svg>
<svg class="a" style="left:1058px;top:289.0px" width="8" height="5" viewBox="0 0 8 5"><path d="M0.6 0.9L4 3.8L7.4 0.9" fill="none" stroke="#cfcfcf" stroke-width="0.95"/></svg>
<svg class="a" style="left:1064.5px;top:337.5px" width="8" height="5" viewBox="0 0 8 5"><path d="M0.6 0.9L4 3.8L7.4 0.9" fill="none" stroke="#cfcfcf" stroke-width="0.95"/></svg>
<svg class="a" style="left:1064.5px;top:362.5px" width="8" height="5" viewBox="0 0 8 5"><path d="M0.6 0.9L4 3.8L7.4 0.9" fill="none" stroke="#cfcfcf" stroke-width="0.95"/></svg>
<svg class="a" style="left:1065px;top:673.0px" width="8" height="5" viewBox="0 0 8 5"><path d="M0.6 0.9L4 3.8L7.4 0.9" fill="none" stroke="#cfcfcf" stroke-width="0.95"/></svg>
<svg class="a" style="left:1065px;top:718.5px" width="8" height="5" viewBox="0 0 8 5"><path d="M0.6 0.9L4 3.8L7.4 0.9" fill="none" stroke="#cfcfcf" stroke-width="0.95"/></svg>
<svg class="a" style="left:256px;top:746.0px" width="8" height="5" viewBox="0 0 8 5"><path d="M0.6 0.9L4 3.8L7.4 0.9" fill="none" stroke="#cfcfcf" stroke-width="0.95"/></svg>
<svg class="a" style="left:307.5px;top:777.5px" width="8" height="5" viewBox="0 0 8 5"><path d="M0.6 0.9L4 3.8L7.4 0.9" fill="none" stroke="#cfcfcf" stroke-width="0.95"/></svg>
<svg class="a" style="left:1058px;top:241.5px" width="8" height="5" viewBox="0 0 8 5"><path d="M0.6 0.8L4 3.9L7.4 0.8" fill="none" stroke="#6a6a6a" stroke-width="1.1"/></svg>

<!-- info menu icon -->
<svg class="a" style="left:273px;top:708px" width="15" height="9" viewBox="0 0 15 9"><path d="M0.5 3h5l-2.5 3.2z" fill="#e0e0e0"/><rect x="6.5" y="1" width="7.5" height="1" fill="#e0e0e0"/><rect x="6.5" y="3" width="7.5" height="1" fill="#e0e0e0"/><rect x="6.5" y="5" width="7.5" height="1" fill="#e0e0e0"/><rect x="6.5" y="7" width="7.5" height="1" fill="#e0e0e0"/></svg>
<!-- zoom -/+ -->
<svg class="a" style="left:163px;top:742px" width="31" height="13" viewBox="0 0 31 13">
 <rect x="1.5" y="1.5" width="10" height="10" fill="none" stroke="#e2e2e2" stroke-width="1"/><path d="M4.2 6.5H8.8" stroke="#e2e2e2" stroke-width="1.1"/>
 <rect x="18.3" y="1.5" width="10.5" height="10" fill="none" stroke="#e2e2e2" stroke-width="1"/><path d="M21.2 6.5H26M23.55 4V9" stroke="#e2e2e2" stroke-width="1.1"/>
</svg>
<!-- globe ? -->
<svg class="a" style="left:270px;top:769px" width="28" height="20" viewBox="0 0 28 20">
 <circle cx="8.6" cy="8.4" r="6.2" fill="#d8d8d8"/>
 <path d="M4.8 4.2C6.2 2.9 8.4 2.7 10 3.5L9.2 5.6L7.6 6.1L8.6 8.2L6.8 9.2L4.5 7Z M10.2 9.1L11.9 10.7L11 13.9L9.5 14.2L9.1 10.9Z" fill="#2c2c2c"/>
 <circle cx="19.2" cy="10.2" r="7.6" fill="#474747"/>
 <circle cx="19.2" cy="10.2" r="6.5" fill="#dadada"/>
 <text x="19.3" y="14.4" text-anchor="middle" font-family="Liberation Sans" font-weight="bold" font-size="11.5" fill="#111">?</text>
</svg>
<!-- warning -->
<svg class="a" style="left:671px;top:772px" width="16" height="16" viewBox="0 0 16 16"><path d="M8 1.5L14.3 14H1.7Z" fill="#f2ca58" stroke="#f2ca58" stroke-width="0.8" stroke-linejoin="round"/><rect x="7.1" y="5" width="1.8" height="5.6" fill="#3a1200"/><rect x="7.1" y="11.4" width="1.8" height="1.6" fill="#3a1200"/></svg>
<!-- color table icons -->
<svg class="a" style="left:883px;top:598px" width="143" height="15" viewBox="0 0 143 15">
 <g fill="none" stroke="#9c9c9c" stroke-width="1">
  <rect x="1.5" y="1.5" width="11" height="11"/>
 </g>
 <rect x="2" y="2" width="3.3" height="3.3" fill="#505050"/><rect x="8.7" y="2" width="3.3" height="3.3" fill="#4e4e4e"/><rect x="5.3" y="5.3" width="3.4" height="3.4" fill="#4e4e4e"/><rect x="2" y="8.7" width="3.3" height="3.3" fill="#4e4e4e"/><rect x="8.7" y="8.7" width="3.3" height="3.3" fill="#4e4e4e"/>
 <rect x="5.3" y="2" width="3.4" height="3.3" fill="#969696"/><rect x="2" y="5.3" width="3.3" height="3.4" fill="#9a9a9a"/><rect x="8.7" y="5.3" width="3.3" height="3.4" fill="#9a9a9a"/><rect x="5.3" y="8.7" width="3.4" height="3.3" fill="#9a9a9a"/>
 <g fill="none" stroke="#8e8e8e" stroke-width="1">
  <path d="M35.5 2.2L40.5 4.8V10.6L35.5 13.2L30.5 10.6V4.8Z M30.5 4.8L35.5 7.4L40.5 4.8 M35.5 7.4V13.2"/>
  <path d="M60.3 5.6V3.8A2.7 2.7 0 0 1 65.7 3.8V5.6"/><rect x="58.5" y="5.8" width="9" height="7"/>
 </g>
 <circle cx="63" cy="9.3" r="1" fill="#8e8e8e"/>
 <g fill="none" stroke="#9a9a9a" stroke-width="1.2">
  <path d="M103.6 3.6H112.4V12.4H107.2L103.6 8.8Z M103.6 8.8H107.2V12.4"/>
  <path d="M130.5 4.6H140.5 M133.2 4.6V2.6H137.8V4.6 M131.6 4.6L132.2 13.2H138.8L139.4 4.6 M134.2 6.5V11.3 M136.8 6.5V11.3"/>
 </g>
</svg>
<!-- playback -->
<div class="a" style="left:916px;top:739px;width:158px;height:14px;background:#5a5a5a"></div>
<div class="a" style="left:917px;top:740px;width:30px;height:13px;background:#3a3a3a"></div>
<div class="a" style="left:949px;top:740px;width:30px;height:13px;background:#3a3a3a"></div>
<div class="a" style="left:981px;top:740px;width:30px;height:13px;background:#3a3a3a"></div>
<div class="a" style="left:1013px;top:740px;width:30px;height:13px;background:#3a3a3a"></div>
<div class="a" style="left:1045px;top:740px;width:28px;height:13px;background:#3a3a3a"></div>
<svg class="a" style="left:916px;top:740px" width="158" height="14" viewBox="0 0 158 14">
 <path d="M7 8L15 3.8V12.2Z M15 8L23 3.8V12.2Z" fill="#7c7c7c"/>
 <path d="M40.5 8L48.5 3.8V12.2Z" fill="#e6e6e6"/><rect x="50" y="3.8" width="2" height="8.4" fill="#e6e6e6"/>
 <path d="M76 2.5L85.5 8L76 13.5Z" fill="#e6e6e6"/>
 <rect x="107.3" y="3.8" width="2" height="8.4" fill="#e6e6e6"/><path d="M110.8 3.8L118.3 8L110.8 12.2Z" fill="#e6e6e6"/>
 <path d="M136 3.8L143.5 8L136 12.2Z M143.5 3.8L151 8L143.5 12.2Z" fill="#e6e6e6"/>
</svg>
</body></html>
